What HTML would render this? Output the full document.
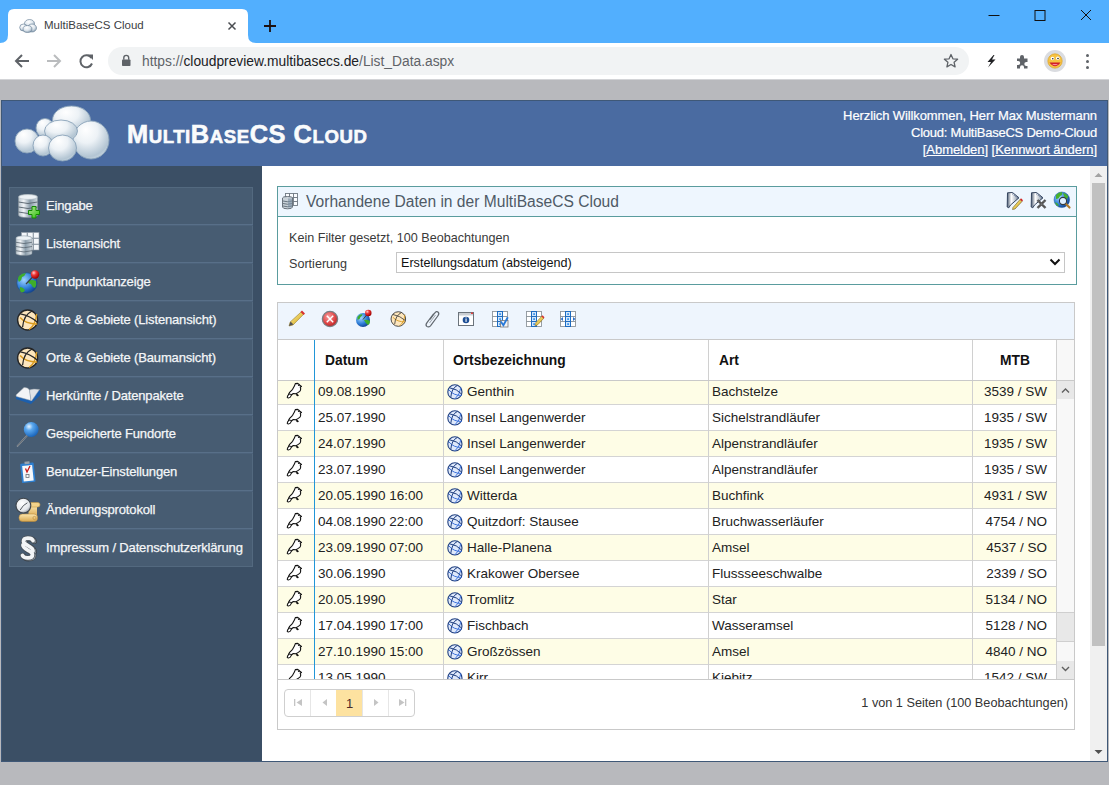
<!DOCTYPE html>
<html><head><meta charset="utf-8">
<style>
*{box-sizing:border-box;margin:0;padding:0}
html,body{width:1109px;height:785px;overflow:hidden;background:#b8b9bd;font-family:"Liberation Sans",sans-serif;position:relative}
.a{position:absolute}
#titlebar{left:0;top:0;width:1109px;height:43px;background:#52affe}
#tab{left:0;top:9px;width:260px;height:34px}
#toolbar{left:0;top:43px;width:1109px;height:36px;background:#fff}
#tline{left:0;top:79px;width:1109px;height:1px;background:#d3d4d7}
#omni{left:108px;top:47px;width:861px;height:28px;border-radius:14px;background:#f1f3f4}
#url{left:142px;top:54px;font-size:13.8px;color:#202124;white-space:nowrap}
#url span{color:#5f6368}
#tabtitle{left:44px;top:18.8px;font-size:11.5px;color:#3c4043;white-space:nowrap}
#frame{left:1px;top:100px;width:1107px;height:662px;border:1px solid #3f5877;background:#fff}
#header{left:2px;top:101px;width:1105px;height:65px;background:#4a6ba1}
#sidebar{left:2px;top:166px;width:260px;height:595px;background:#3b4f65}
#vscroll{left:1090px;top:166px;width:17px;height:595px;background:#f0f0f0}
#logo{left:10px;top:100px}
#brand{left:127px;top:118.5px;font-size:25.4px;font-weight:bold;color:#fafbfc;white-space:nowrap;line-height:30px;letter-spacing:0.55px;-webkit-text-stroke:0.6px #fafbfc}
#brand b{font-weight:bold}#brand i{font-style:normal;font-size:18.6px}
#welcome{right:12px;top:107px;text-align:right;color:#fff;font-size:13px;line-height:17px;white-space:nowrap;-webkit-text-stroke:0.2px #fff}
#welcome u{text-decoration:underline}

#menu{left:9px;top:187px;width:244px;height:380px;background:#475c72;border:1px solid #53697f}
.sep{position:absolute;left:9px;width:244px;height:1px;background:#586f88;box-shadow:0 1px 0 #4c627a}
.mi{position:absolute;left:46px;margin-top:1px;font-size:13px;letter-spacing:-0.15px;color:#f4f6f8;-webkit-text-stroke:0.25px #f4f6f8;white-space:nowrap;line-height:16px}

#panel{left:277px;top:186px;width:800px;height:99px;border:1px solid #5a9c9e;background:#fff}
#phead{left:278px;top:187px;width:798px;height:30px;background:#eef6fe;border-bottom:1px solid #5a9c9e}
#ptitle{left:306px;top:193px;font-size:15.6px;color:#4e5a66;white-space:nowrap;line-height:18px}
.txt{position:absolute;font-size:12.6px;color:#3a3a3a;white-space:nowrap;line-height:15px}
#sel{left:396px;top:252px;width:669px;height:21px;border:1px solid #c6c6c6;background:#fff}
#seltxt{left:401px;top:256px;font-size:12.6px;color:#111;white-space:nowrap;line-height:15px}
#grid{left:277px;top:302px;width:798px;height:428px;border:1px solid #c9c9c9;background:#fff}
#gtool{left:278px;top:303px;width:796px;height:37px;background:#eef5fd;border-bottom:1px solid #c9c9c9}
#ghead{left:278px;top:340px;width:779px;height:41px;background:#fff;border-bottom:1px solid #c9c9c9}
.th{position:absolute;top:353px;font-size:13.8px;font-weight:bold;color:#111;white-space:nowrap;line-height:16px}
.vl{position:absolute;width:1px;background:#d0d0d0}
.row{position:absolute;left:278px;width:779px;height:26px;border-bottom:1px solid #d4d4d4}
.ye{background:#fefde6}
.td{position:absolute;font-size:13.5px;color:#222;white-space:nowrap;line-height:16px}
#rows{left:278px;top:381px;width:796px;height:298px;overflow:hidden}
</style></head>
<body>
<div id="titlebar" class="a"></div>
<svg id="tab" class="a" width="260" height="34" viewBox="0 0 260 34">
 <path d="M0 34 Q8 34 8 26 L8 6 Q8 0 14 0 L242 0 Q248 0 248 6 L248 26 Q248 34 256 34 Z" fill="#fff"/>
</svg>
<div id="tabtitle" class="a">MultiBaseCS Cloud</div>
<div id="toolbar" class="a"></div>
<div id="tline" class="a"></div>
<div id="omni" class="a"></div>
<div id="url" class="a"><span>https://</span>cloudpreview.multibasecs.de<span>/List_Data.aspx</span></div>


<svg class="a" style="left:0;top:0" width="1109" height="80" viewBox="0 0 1109 80">
 <defs>
  <radialGradient id="fav" cx="0.4" cy="0.3" r="0.8"><stop offset="0" stop-color="#fff"/><stop offset="0.5" stop-color="#dfe7ee"/><stop offset="1" stop-color="#7990a5"/></radialGradient>
 </defs>
 <g fill="url(#fav)" stroke="#5f7890" stroke-width="0.6">
  <ellipse cx="29.5" cy="23.5" rx="5" ry="4"/>
  <ellipse cx="23.5" cy="27.5" rx="3.8" ry="3.5"/>
  <ellipse cx="32" cy="28" rx="4.5" ry="4"/>
  <ellipse cx="27.5" cy="29" rx="4.5" ry="3.5"/>
 </g>
 <path d="M228.5 22.5 L235.5 29.5 M235.5 22.5 L228.5 29.5" stroke="#4a4d51" stroke-width="1.5"/>
 <path d="M270 20 V32 M264 26 H276" stroke="#1c1010" stroke-width="1.8"/>
 <path d="M988.5 15.5 H999.5" stroke="#111" stroke-width="1"/>
 <rect x="1035" y="10.5" width="10" height="10" fill="none" stroke="#111" stroke-width="1"/>
 <path d="M1081 10 L1091 20 M1091 10 L1081 20" stroke="#111" stroke-width="1"/>
 <path d="M29 61 H16 M22 55 L16 61 L22 67" fill="none" stroke="#5f6368" stroke-width="2"/>
 <path d="M47 61 H60 M54 55 L60 61 L54 67" fill="none" stroke="#babcbe" stroke-width="2"/>
 <path d="M91.5 58 A6 6 0 1 0 92 63.5" fill="none" stroke="#5f6368" stroke-width="2"/>
 <path d="M87.5 54.5 H93 V60 Z" fill="#5f6368"/>
 <rect x="122" y="59.5" width="8.5" height="6.5" rx="0.8" fill="#5f6368"/>
 <path d="M123.8 59.8 V57.8 A2.45 2.45 0 0 1 128.7 57.8 V59.8" fill="none" stroke="#5f6368" stroke-width="1.4"/>
 <path d="M951 54.5 L952.9 58.8 L957.6 59.2 L954.1 62.3 L955.1 66.9 L951 64.5 L946.9 66.9 L947.9 62.3 L944.4 59.2 L949.1 58.8 Z" fill="none" stroke="#5f6368" stroke-width="1.3" stroke-linejoin="round"/>
 <path d="M993.5 55 L987.5 62 H991 L988 67.5 L995.5 59.5 H992 L994.5 55 Z" fill="#202124"/>
 <path d="M1017 58.5 h3 v-1.5 a2 2 0 0 1 4 0 v1.5 h3.5 v3.5 h-1.2 a2 2 0 0 0 0 4 h1.2 v2.5 h-3.5 v-1.2 a2 2 0 0 0 -4 0 v1.2 h-3 v-3.5 h1.2 a2 2 0 0 0 0 -4 h-1.2 Z" fill="#5f6368"/>
 <circle cx="1055" cy="61" r="11" fill="#dadce0"/>
 <circle cx="1055" cy="61" r="7.2" fill="#f6c343" stroke="#d99a1a" stroke-width="0.6"/>
 <path d="M1049.5 62.5 Q1055 70 1060.5 62.5 Z" fill="#d0202a"/>
 <path d="M1052 64 Q1055 66.5 1058 64" fill="#ff8aa0"/>
 <circle cx="1052.5" cy="58.5" r="1.8" fill="#fff"/><circle cx="1057.8" cy="58.2" r="1.8" fill="#fff"/>
 <circle cx="1052.8" cy="58.8" r="0.8" fill="#222"/><circle cx="1058" cy="58.5" r="0.8" fill="#222"/>
 <circle cx="1087.5" cy="55.5" r="1.5" fill="#5f6368"/><circle cx="1087.5" cy="61.5" r="1.5" fill="#5f6368"/><circle cx="1087.5" cy="67.5" r="1.5" fill="#5f6368"/>
</svg>
<div id="frame" class="a"></div>
<div id="header" class="a"></div>
<div id="sidebar" class="a"></div>
<div id="vscroll" class="a"></div>

<svg id="logo" class="a" width="110" height="66" viewBox="10 100 110 66">
 <defs>
  <radialGradient id="cg" cx="0.4" cy="0.32" r="0.8" fx="0.35" fy="0.22">
   <stop offset="0" stop-color="#ffffff"/>
   <stop offset="0.4" stop-color="#edf2f6"/>
   <stop offset="0.8" stop-color="#b3c5d3"/>
   <stop offset="1" stop-color="#d5e0e8"/>
  </radialGradient>
 </defs>
 <g fill="url(#cg)" stroke="#8aa3b9" stroke-width="0.9">
  <ellipse cx="71.5" cy="120" rx="19" ry="14"/>
  <ellipse cx="45" cy="128" rx="9" ry="9.5"/>
  <ellipse cx="27" cy="141" rx="12" ry="12"/>
  <ellipse cx="91" cy="140" rx="18" ry="19"/>
  <ellipse cx="61" cy="131" rx="16.5" ry="11"/>
  <ellipse cx="43" cy="145.5" rx="10" ry="10.5"/>
  <ellipse cx="62.5" cy="148" rx="14" ry="13"/>
 </g>
</svg>
<div id="menu" class="a"></div>
<div class="sep" style="top:224px"></div><div class="sep" style="top:262px"></div><div class="sep" style="top:300px"></div><div class="sep" style="top:338px"></div><div class="sep" style="top:376px"></div><div class="sep" style="top:414px"></div><div class="sep" style="top:452px"></div><div class="sep" style="top:490px"></div><div class="sep" style="top:528px"></div>
<div class="mi" style="top:197px">Eingabe</div>
<div class="mi" style="top:235px">Listenansicht</div>
<div class="mi" style="top:273px">Fundpunktanzeige</div>
<div class="mi" style="top:311px">Orte &amp; Gebiete (Listenansicht)</div>
<div class="mi" style="top:349px">Orte &amp; Gebiete (Baumansicht)</div>
<div class="mi" style="top:387px">Herkünfte / Datenpakete</div>
<div class="mi" style="top:425px">Gespeicherte Fundorte</div>
<div class="mi" style="top:463px">Benutzer-Einstellungen</div>
<div class="mi" style="top:501px">Änderungsprotokoll</div>
<div class="mi" style="top:539px">Impressum / Datenschutzerklärung</div>

<svg class="a" style="left:0;top:0" width="262" height="785" viewBox="0 0 262 785">
<defs>
 <linearGradient id="dbg" x1="0" y1="0" x2="1" y2="0">
  <stop offset="0" stop-color="#b9c4cc"/><stop offset="0.28" stop-color="#f2f5f8"/><stop offset="0.6" stop-color="#8b9dab"/><stop offset="1" stop-color="#cdd6dd"/>
 </linearGradient>
 <linearGradient id="plg" x1="0" y1="0" x2="1" y2="1">
  <stop offset="0" stop-color="#b5e59a"/><stop offset="1" stop-color="#2ec40a"/>
 </linearGradient>
 <radialGradient id="glb" cx="0.35" cy="0.35" r="0.7">
  <stop offset="0" stop-color="#9fd3ff"/><stop offset="0.6" stop-color="#2f7fd8"/><stop offset="1" stop-color="#12408f"/>
 </radialGradient>
 <radialGradient id="redb" cx="0.35" cy="0.3" r="0.7">
  <stop offset="0" stop-color="#ffd0d0"/><stop offset="0.4" stop-color="#f03a3a"/><stop offset="1" stop-color="#a00000"/>
 </radialGradient>
 <radialGradient id="blub" cx="0.35" cy="0.3" r="0.75">
  <stop offset="0" stop-color="#e8f4ff"/><stop offset="0.35" stop-color="#5aa7ee"/><stop offset="1" stop-color="#1561b8"/>
 </radialGradient>
 <linearGradient id="scr" x1="0" y1="0" x2="0" y2="1">
  <stop offset="0" stop-color="#fbe7b0"/><stop offset="1" stop-color="#d9a850"/>
 </linearGradient>
 <radialGradient id="clk" cx="0.4" cy="0.35" r="0.7">
  <stop offset="0" stop-color="#ffffff"/><stop offset="0.7" stop-color="#e3e6ea"/><stop offset="1" stop-color="#8a9098"/>
 </radialGradient>
 <linearGradient id="par" x1="0" y1="0" x2="1" y2="1">
  <stop offset="0" stop-color="#ffffff"/><stop offset="0.6" stop-color="#d8dde2"/><stop offset="1" stop-color="#7d858d"/>
 </linearGradient>
 <g id="db">
  <path d="M0 2.5 Q0 0 9.5 0 Q19 0 19 2.5 L19 20.5 Q19 23 9.5 23 Q0 23 0 20.5 Z" fill="url(#dbg)" stroke="#8a969f" stroke-width="0.7"/>
  <ellipse cx="9.5" cy="2.5" rx="9.3" ry="2.4" fill="#eef3f6" stroke="#a9b5bd" stroke-width="0.5"/>
  <path d="M0 7.5 Q9.5 10.5 19 7.5 M0 12.5 Q9.5 15.5 19 12.5 M0 17.5 Q9.5 20.5 19 17.5" fill="none" stroke="#55616b" stroke-width="0.9"/>
 </g>
 <g id="oglobe">
  <circle cx="11" cy="11" r="10" fill="#fde6bd" stroke="#262626" stroke-width="1.4"/>
  <path d="M3.5 8.5 Q9 15 20.5 15 M20 5 Q19 16 12.5 20.5" fill="none" stroke="#d89a1e" stroke-width="1.4"/>
  <path d="M15.5 2 Q7 6 6 18 M3.8 4.8 Q14 7 20.5 13" fill="none" stroke="#262626" stroke-width="1.3"/>
 </g>
</defs>
<!-- 1 Eingabe -->
<use href="#db" x="18.5" y="194.5"/>
<path d="M32 206.5 h4 v4 h3.5 v4 h-3.5 v3.5 h-4 v-3.5 h-3.5 v-4 h3.5 z" fill="url(#plg)" stroke="#138a00" stroke-width="1"/>
<!-- 2 Listenansicht -->
<g fill="#f4f7fa" stroke="#8f9aa5" stroke-width="0.6">
 <rect x="21.5" y="232.5" width="5.5" height="5.5"/><rect x="27.5" y="232.5" width="5.5" height="5.5"/><rect x="33.5" y="232.5" width="5.5" height="5.5"/>
 <rect x="33.5" y="238.5" width="5.5" height="5.5"/><rect x="33.5" y="244.5" width="5.5" height="5.5"/>
 <rect x="27.5" y="238.5" width="5.5" height="5.5"/><rect x="27.5" y="244.5" width="5.5" height="5.5"/>
</g>
<g transform="translate(16 236) scale(0.84)"><use href="#db"/></g>
<!-- 3 Fundpunktanzeige -->
<circle cx="27" cy="283" r="10.2" fill="url(#glb)" stroke="#1d4f8a" stroke-width="0.6"/>
<path d="M19 276 q3 -3 7 -3 q-1 3 -4 4 q0 3 -3 5 q-2 -3 0 -6z M28 281 q4 -2 8 0 q1 4 -1 7 q-3 -1 -4 -4 q-3 0 -3 -3z M20 287 q3 0 5 3 q-1 3 -4 2 q-2 -2 -1 -5z" fill="#3fae2a"/>
<path d="M26 284 L34 275.5" stroke="#404040" stroke-width="1.2"/>
<circle cx="35" cy="274.5" r="4.2" fill="url(#redb)"/>
<!-- 4,5 Orte -->
<use href="#oglobe" x="16.6" y="309"/>
<use href="#oglobe" x="16.6" y="347"/>
<!-- 6 Herkuenfte book -->
<path d="M16 396.5 L24.5 388.5 Q28 388 30 391 L40 390.5 L40.5 395 L31 404 L16 399 Z" fill="#1b5fae"/>
<path d="M16 395 L24 387.5 Q28 387 29.5 390 L31 400.5 L16.5 396.5 Z" fill="#f3f4f6" stroke="#9aa3ab" stroke-width="0.5"/>
<path d="M29.5 390 Q33 388.5 39.5 389.5 L31.5 401 L31 400.5 Z" fill="#e1e5e9" stroke="#9aa3ab" stroke-width="0.5"/>
<!-- 7 Gespeicherte Fundorte -->
<path d="M28.5 434 L17.5 446" stroke="#9aa0a6" stroke-width="1.6" stroke-linecap="round"/>
<path d="M28.5 434 L17.5 446" stroke="#40454a" stroke-width="0.6"/>
<circle cx="31.2" cy="429.5" r="7.4" fill="url(#blub)"/>
<!-- 8 Benutzer clipboard -->
<rect x="21" y="463" width="13.5" height="19.5" rx="1" fill="#2d7fd0" transform="rotate(-6 28 472)"/>
<rect x="22.8" y="465.5" width="10" height="15.5" fill="#f6f8fa" transform="rotate(-6 28 472)"/>
<rect x="25.5" y="461.5" width="5" height="2.5" fill="#9aa3ab" transform="rotate(-6 28 472)"/>
<path d="M25.5 468.5 l1.5 3.5 l3 -6" fill="none" stroke="#c81818" stroke-width="1.3"/>
<rect x="26" y="474.5" width="3" height="3" fill="none" stroke="#6a7078" stroke-width="0.8"/>
<!-- 9 Aenderungsprotokoll -->
<rect x="28.5" y="505" width="8.5" height="12" fill="url(#scr)"/>
<rect x="28.5" y="502.5" width="11.5" height="4.5" rx="2.2" fill="#f3d38a" stroke="#c59a48" stroke-width="0.6"/>
<rect x="19" y="514" width="18.5" height="7.5" rx="3.5" fill="url(#scr)" stroke="#b98a3a" stroke-width="0.6"/>
<circle cx="34.5" cy="518" r="1.6" fill="none" stroke="#b98a3a" stroke-width="0.6"/>
<circle cx="23.4" cy="505.6" r="7.4" fill="url(#clk)" stroke="#3f464d" stroke-width="1.1"/>
<path d="M23.4 505.6 L27.4 502.8 M23.4 505.6 L20.2 510" stroke="#30363c" stroke-width="0.8"/>
<!-- 10 Impressum paragraph -->
<g transform="translate(20 536.5)" fill="none" stroke-linecap="round">
 <g transform="translate(1.3 0.8)" stroke="#3a4148" stroke-width="5.4"><path d="M13 4 C11.5 0.8 3.5 0.6 3.5 4.8 C3.5 9 13 9.5 13 14.5"/><path d="M2.5 19 C4 22.2 12.5 22.4 12.5 18.2 C12.5 14 3 13.5 3 8.5"/></g>
 <g transform="translate(1.3 0.8)" stroke="#9aa2aa" stroke-width="3.8"><path d="M13 4 C11.5 0.8 3.5 0.6 3.5 4.8 C3.5 9 13 9.5 13 14.5"/><path d="M2.5 19 C4 22.2 12.5 22.4 12.5 18.2 C12.5 14 3 13.5 3 8.5"/></g>
 <g stroke="#4a525a" stroke-width="5.2"><path d="M13 4 C11.5 0.8 3.5 0.6 3.5 4.8 C3.5 9 13 9.5 13 14.5"/><path d="M2.5 19 C4 22.2 12.5 22.4 12.5 18.2 C12.5 14 3 13.5 3 8.5"/></g>
 <g stroke="#f2f4f6" stroke-width="3.8"><path d="M13 4 C11.5 0.8 3.5 0.6 3.5 4.8 C3.5 9 13 9.5 13 14.5"/><path d="M2.5 19 C4 22.2 12.5 22.4 12.5 18.2 C12.5 14 3 13.5 3 8.5"/></g>
</g>
</svg>

<div id="panel" class="a"></div>
<div id="phead" class="a"></div>
<div id="ptitle" class="a">Vorhandene Daten in der MultiBaseCS Cloud</div>
<div class="txt" style="left:289px;top:231px">Kein Filter gesetzt, 100 Beobachtungen</div>
<div class="txt" style="left:289px;top:257px">Sortierung</div>
<div id="sel" class="a"></div>
<div id="seltxt" class="a">Erstellungsdatum (absteigend)</div>
<svg class="a" style="left:1049px;top:258px" width="12" height="8" viewBox="0 0 12 8"><path d="M1.5 1.5 L6 6 L10.5 1.5" fill="none" stroke="#111" stroke-width="2"/></svg>
<div id="grid" class="a"></div>
<div id="gtool" class="a"></div>
<div id="ghead" class="a"></div>
<div class="th" style="left:325px">Datum</div>
<div class="th" style="left:453px">Ortsbezeichnung</div>
<div class="th" style="left:719px">Art</div>
<div class="th" style="left:1000px">MTB</div>
<div class="a" style="left:1056px;top:340px;width:18px;height:41px;background:#f8f8f8;border-left:1px solid #d0d0d0;border-bottom:1px solid #c9c9c9"></div>
<div id="rows" class="a">
<div class="row ye" style="top:-2px;left:0"></div><div class="td" style="left:40px;top:3px">09.08.1990</div><div class="td" style="left:189px;top:3px">Genthin</div><div class="td" style="left:434px;top:3px">Bachstelze</div><div class="td" style="right:27px;top:3px">3539 / SW</div>
<div class="row" style="top:24px;left:0"></div><div class="td" style="left:40px;top:29px">25.07.1990</div><div class="td" style="left:189px;top:29px">Insel Langenwerder</div><div class="td" style="left:434px;top:29px">Sichelstrandläufer</div><div class="td" style="right:27px;top:29px">1935 / SW</div>
<div class="row ye" style="top:50px;left:0"></div><div class="td" style="left:40px;top:55px">24.07.1990</div><div class="td" style="left:189px;top:55px">Insel Langenwerder</div><div class="td" style="left:434px;top:55px">Alpenstrandläufer</div><div class="td" style="right:27px;top:55px">1935 / SW</div>
<div class="row" style="top:76px;left:0"></div><div class="td" style="left:40px;top:81px">23.07.1990</div><div class="td" style="left:189px;top:81px">Insel Langenwerder</div><div class="td" style="left:434px;top:81px">Alpenstrandläufer</div><div class="td" style="right:27px;top:81px">1935 / SW</div>
<div class="row ye" style="top:102px;left:0"></div><div class="td" style="left:40px;top:107px">20.05.1990 16:00</div><div class="td" style="left:189px;top:107px">Witterda</div><div class="td" style="left:434px;top:107px">Buchfink</div><div class="td" style="right:27px;top:107px">4931 / SW</div>
<div class="row" style="top:128px;left:0"></div><div class="td" style="left:40px;top:133px">04.08.1990 22:00</div><div class="td" style="left:189px;top:133px">Quitzdorf: Stausee</div><div class="td" style="left:434px;top:133px">Bruchwasserläufer</div><div class="td" style="right:27px;top:133px">4754 / NO</div>
<div class="row ye" style="top:154px;left:0"></div><div class="td" style="left:40px;top:159px">23.09.1990 07:00</div><div class="td" style="left:189px;top:159px">Halle-Planena</div><div class="td" style="left:434px;top:159px">Amsel</div><div class="td" style="right:27px;top:159px">4537 / SO</div>
<div class="row" style="top:180px;left:0"></div><div class="td" style="left:40px;top:185px">30.06.1990</div><div class="td" style="left:189px;top:185px">Krakower Obersee</div><div class="td" style="left:434px;top:185px">Flussseeschwalbe</div><div class="td" style="right:27px;top:185px">2339 / SO</div>
<div class="row ye" style="top:206px;left:0"></div><div class="td" style="left:40px;top:211px">20.05.1990</div><div class="td" style="left:189px;top:211px">Tromlitz</div><div class="td" style="left:434px;top:211px">Star</div><div class="td" style="right:27px;top:211px">5134 / NO</div>
<div class="row" style="top:232px;left:0"></div><div class="td" style="left:40px;top:237px">17.04.1990 17:00</div><div class="td" style="left:189px;top:237px">Fischbach</div><div class="td" style="left:434px;top:237px">Wasseramsel</div><div class="td" style="right:27px;top:237px">5128 / NO</div>
<div class="row ye" style="top:258px;left:0"></div><div class="td" style="left:40px;top:263px">27.10.1990 15:00</div><div class="td" style="left:189px;top:263px">Großzössen</div><div class="td" style="left:434px;top:263px">Amsel</div><div class="td" style="right:27px;top:263px">4840 / NO</div>
<div class="row" style="top:284px;left:0"></div><div class="td" style="left:40px;top:289px">13.05.1990</div><div class="td" style="left:189px;top:289px">Kirr</div><div class="td" style="left:434px;top:289px">Kiebitz</div><div class="td" style="right:27px;top:289px">1542 / SW</div>
<div class="vl" style="left:165px;top:0;height:298px"></div><div class="vl" style="left:430px;top:0;height:298px"></div><div class="vl" style="left:694px;top:0;height:298px"></div><div class="vl" style="left:778px;top:0;height:298px"></div>
<div class="a" style="left:779px;top:0;width:17px;height:298px;background:#f8f8f8"></div>
<div class="a" style="left:779px;top:0;width:17px;height:18px;background:#e8e8e8"></div>
<div class="a" style="left:779px;top:231px;width:17px;height:30px;background:#e8e8e8;border-top:1px solid #cfcfcf;border-bottom:1px solid #cfcfcf"></div>
<div class="a" style="left:779px;top:280px;width:17px;height:18px;background:#e8e8e8"></div>
</div>
<div class="vl" style="left:443px;top:340px;height:40px"></div><div class="vl" style="left:708px;top:340px;height:40px"></div><div class="vl" style="left:972px;top:340px;height:40px"></div>
<div class="a" style="left:314px;top:340px;width:1px;height:339px;background:#2196d8"></div>
<div class="a" style="left:278px;top:679px;width:796px;height:1px;background:#c9c9c9"></div>
<div class="a" style="left:284px;top:689px;width:131px;height:28px;border:1px solid #cfcfcf;border-radius:4px;background:#fff;overflow:hidden">
<div class="a" style="left:25px;top:0;width:1px;height:26px;background:#e6e6e6"></div><div class="a" style="left:77px;top:0;width:1px;height:26px;background:#e6e6e6"></div>
<div class="a" style="left:51px;top:0;width:26px;height:26px;background:#fde2a0"></div>
<div class="a" style="left:103px;top:0;width:1px;height:26px;background:#e6e6e6"></div>
</div>
<div class="td" style="left:346px;top:695.5px;font-size:13px;color:#4a2a2a">1</div>
<div class="td" style="right:41px;top:694.5px;font-size:12.7px;color:#333">1 von 1 Seiten (100 Beobachtungen)</div>

<svg class="a" style="left:262px;top:166px" width="845" height="595" viewBox="262 166 845 595">
<defs>
 <g id="bglobe">
  <circle cx="0" cy="0" r="7.1" fill="#dfe9fb" stroke="#1f3f80" stroke-width="1.1"/>
  <path d="M-6 -2 Q-1 4 7 3.5 M6 -4.5 Q5 3 0 7" fill="none" stroke="#3f74dc" stroke-width="1"/>
  <path d="M2.5 -6.5 Q-3.5 -3.5 -4 5 M-5 -4 Q2 -3 6.5 2" fill="none" stroke="#1f3f80" stroke-width="1"/>
 </g>
 <g id="bird">
  <path d="M8.3 0.6 L10.8 0.4 Q12 0.8 12.5 2 L14.5 3.4 L13.2 4 Q13.9 5.5 13.6 6.6 Q13.3 8 12.7 8.4 Q11 9.6 9 10.7 L6.3 10.5 Q4.6 11.5 4.2 12.5 Q3.8 14.6 1.4 15 Q0 14.8 0.3 13.9 Q0.5 12.8 1.6 11.6 L2.6 9.3 Q4.2 7.8 5.6 6.3 Q6.6 4.5 7.4 3.1 Z" fill="#fff" stroke="#111" stroke-width="1.1" stroke-linejoin="round"/>
  <path d="M9.2 10.6 L9.6 12.4 L11.8 12.3 M10.4 11 L10.6 13.2 M1.4 10.9 L4.8 11.6" fill="none" stroke="#111" stroke-width="0.95"/>
  <circle cx="11.7" cy="2.3" r="0.8" fill="#111"/>
 </g>
 <linearGradient id="pen" x1="0" y1="0" x2="1" y2="1"><stop offset="0" stop-color="#fff3a0"/><stop offset="1" stop-color="#d0a010"/></linearGradient>
 <radialGradient id="redx" cx="0.4" cy="0.35" r="0.7"><stop offset="0" stop-color="#f8a0a0"/><stop offset="0.6" stop-color="#e04848"/><stop offset="1" stop-color="#b02020"/></radialGradient>
 <radialGradient id="glb2" cx="0.35" cy="0.35" r="0.7"><stop offset="0" stop-color="#a8d8ff"/><stop offset="0.6" stop-color="#2f7fd8"/><stop offset="1" stop-color="#12408f"/></radialGradient>
 <radialGradient id="redb2" cx="0.35" cy="0.3" r="0.7"><stop offset="0" stop-color="#ffd0d0"/><stop offset="0.4" stop-color="#f03a3a"/><stop offset="1" stop-color="#a00000"/></radialGradient>
 <linearGradient id="fun" x1="0" y1="0" x2="1" y2="0"><stop offset="0" stop-color="#4a5a70"/><stop offset="0.35" stop-color="#ffffff"/><stop offset="0.7" stop-color="#b9c2cc"/><stop offset="1" stop-color="#55657a"/></linearGradient>
</defs>
<!-- panel header icon: db + grid -->
<g fill="#fafcfe" stroke="#707a84" stroke-width="0.9">
 <rect x="285.5" y="193.5" width="4" height="4"/><rect x="289.5" y="193.5" width="4" height="4"/><rect x="293.5" y="193.5" width="4" height="4"/>
 <rect x="293.5" y="197.5" width="4" height="4"/><rect x="293.5" y="201.5" width="4" height="4"/>
</g>
<path d="M282.5 198 Q282.5 196.5 287.5 196.5 Q292.5 196.5 292.5 198 L292.5 207 Q292.5 208.8 287.5 208.8 Q282.5 208.8 282.5 207 Z" fill="#c9d2d9" stroke="#5d6770" stroke-width="0.9"/>
<path d="M283 201 Q287.5 202.5 292 201 M283 203.5 Q287.5 205 292 203.5 M283 206 Q287.5 207.5 292 206" fill="none" stroke="#4d5a66" stroke-width="0.8"/>
<rect x="288" y="198.5" width="4" height="9" fill="#7e93a5" opacity="0.6"/>
<!-- panel header right icons -->
<g>
 <path d="M1007.5 192.8 L1012.5 192.5 L1019 197.8 L1010.5 205 L1008.8 207.8 L1007.2 207 Z" fill="url(#fun)" stroke="#34445e" stroke-width="1"/><path d="M1012.5 193.5 L1018 198" stroke="#6a7a9a" stroke-width="1.5" stroke-dasharray="1 1"/>
 <path d="M1013 207.5 L1020 199.5 L1022 201.5 L1015 209 L1012.5 209.5 Z" fill="url(#pen)" stroke="#6a5a20" stroke-width="0.6"/>
 <path d="M1020 199.5 L1021 198.3 L1023 200.3 L1022 201.5 Z" fill="#d02020"/>
 <path d="M1031.5 192.8 L1036.5 192.5 L1043 197.8 L1034.5 205 L1032.8 207.8 L1031.2 207 Z" fill="url(#fun)" stroke="#34445e" stroke-width="1"/><path d="M1036.5 193.5 L1042 198" stroke="#6a7a9a" stroke-width="1.5" stroke-dasharray="1 1"/>
 <path d="M1037.5 200 L1045.5 208 M1045.5 200 L1037.5 208" stroke="#4a4a4a" stroke-width="2.4"/><path d="M1037.5 200 L1045.5 208 M1045.5 200 L1037.5 208" stroke="#cfcfcf" stroke-width="0.6" stroke-dasharray="0.8 1.2"/>
 <circle cx="1061.8" cy="199.8" r="7.8" fill="url(#glb2)" stroke="#1f5a9a" stroke-width="0.5"/>
 <path d="M1056 195 q3 -3 6 -3 q1 3 -2 4 q-1 3 -4 3z M1063 193 q3 0 5 3 q0 3 -2 3 q-2 -2 -3 -6z M1055 202 q3 1 4 4 q-3 0 -4 -4z" fill="#47b02c"/>
 <path d="M1065.5 203.5 L1069.5 207.5" stroke="#b07a2a" stroke-width="2.2" stroke-linecap="round"/>
 <circle cx="1063" cy="201" r="3.6" fill="#dff0ff" stroke="#333a40" stroke-width="1.1"/>
</g>
<!-- toolbar icons -->
<path d="M289 326 L290.2 322 L301.3 311.8 L303.7 314.2 L293 325 Z" fill="url(#pen)" stroke="#9a8030" stroke-width="0.6"/>
<path d="M289 326 L290.5 321.5 L293.5 324.5 Z" fill="#555"/>
<path d="M300.5 312 L302 310.5 L305 313.5 L303.5 315 Z" fill="#d83030"/>
<circle cx="330" cy="319" r="7.6" fill="url(#redx)" stroke="#7a7f84" stroke-width="1.3"/>
<path d="M326.8 315.8 L333.2 322.2 M333.2 315.8 L326.8 322.2" stroke="#fff" stroke-width="1.5"/>
<circle cx="363" cy="320" r="7" fill="url(#glb2)"/>
<path d="M357.5 317 q2 -3 5 -3 q0 2 -2 3 q0 2 -3 3z M364 320 q3 -1 6 1 q0 3 -2 4 q-2 -1 -4 -5z" fill="#3fae2a"/>
<path d="M363 319.5 L367 314.5" stroke="#404040" stroke-width="1"/>
<circle cx="368.3" cy="313" r="3.2" fill="url(#redb2)"/>
<g transform="translate(390.3 311) scale(0.73)">
  <circle cx="11" cy="11" r="10" fill="#fde6bd" stroke="#333" stroke-width="1.2"/>
  <path d="M3.5 8.5 Q9 15 20.5 15 M20 5 Q19 16 12.5 20.5" fill="none" stroke="#d89a1e" stroke-width="1.2"/>
  <path d="M15.5 2 Q7 6 6 18 M3.8 4.8 Q14 7 20.5 13" fill="none" stroke="#333" stroke-width="1.1"/>
</g>
<path d="M430 319.5 L434.8 313 Q436.6 310.8 438.2 312.2 Q439.6 313.6 437.8 316 L430.5 325.8 Q428.6 327.8 426.8 326.4 Q425.2 325 427 322.6 L433.8 313.5" fill="none" stroke="#5f666d" stroke-width="1.2"/><path d="M429.5 323 L435.5 315" fill="none" stroke="#8a9198" stroke-width="0.8"/>
<rect x="458.5" y="312.5" width="15" height="13" fill="#fff" stroke="#6b737b" stroke-width="1"/>
<rect x="459" y="313" width="14" height="2.5" fill="#c9ced3"/>
<rect x="471" y="312.5" width="2" height="1.5" fill="#e04040"/>
<circle cx="466" cy="320" r="3.3" fill="#1e4f95"/>
<rect x="465.5" y="318.7" width="1.1" height="3.2" fill="#fff"/><rect x="465.5" y="317.4" width="1.1" height="0.9" fill="#fff"/>
<g id="tgrid">
 <g fill="#fff" stroke="#8e959c" stroke-width="0.9">
  <rect x="492.5" y="311.5" width="5" height="5"/><rect x="502.5" y="311.5" width="5" height="5"/>
  <rect x="492.5" y="316.5" width="5" height="5"/><rect x="502.5" y="316.5" width="5" height="5"/>
  <rect x="492.5" y="321.5" width="5" height="5"/><rect x="502.5" y="321.5" width="5" height="5"/>
 </g>
 <g fill="#d2e6fb" stroke="#1f6cc0" stroke-width="1">
  <rect x="497.5" y="311.5" width="5" height="5"/><rect x="497.5" y="316.5" width="5" height="5"/><rect x="497.5" y="321.5" width="5" height="5"/>
 </g>
 <rect x="499.2" y="313.2" width="1.8" height="1.8" fill="#3d97ee"/><rect x="499.2" y="318.2" width="1.8" height="1.8" fill="#3d97ee"/><rect x="499.2" y="323.2" width="1.8" height="1.8" fill="#3d97ee"/>
</g>
<rect x="500.5" y="320.5" width="7.5" height="6.5" fill="#f4f4f4" stroke="#777" stroke-width="0.8"/>
<path d="M500.8 321.5 L503.4 325.3 L507.8 317.3" fill="none" stroke="#2a7ad8" stroke-width="1.9"/>
<use href="#tgrid" x="34"/>
<path d="M535 326 L536 322.5 L542 316 L544 318 L538 324.5 Z" fill="url(#pen)" stroke="#8a7020" stroke-width="0.6"/>
<path d="M541.5 316.5 L542.5 315.3 L544.5 317.3 L543.5 318.5 Z" fill="#d83030"/>
<use href="#tgrid" x="68"/>
<path d="M560.5 319 L563 317 L563 321 Z M575.5 319 L573 317 L573 321 Z" fill="#2f6fc8"/>
<svg x="278" y="381" width="779" height="298" viewBox="278 381 779 298" overflow="hidden"><use href="#bird" x="287" y="383"/><use href="#bird" x="287" y="409"/><use href="#bird" x="287" y="435"/><use href="#bird" x="287" y="461"/><use href="#bird" x="287" y="487"/><use href="#bird" x="287" y="513"/><use href="#bird" x="287" y="539"/><use href="#bird" x="287" y="565"/><use href="#bird" x="287" y="591"/><use href="#bird" x="287" y="617"/><use href="#bird" x="287" y="643"/><use href="#bird" x="287" y="669"/><use href="#bglobe" x="454.9" y="391.9"/><use href="#bglobe" x="454.9" y="417.9"/><use href="#bglobe" x="454.9" y="443.9"/><use href="#bglobe" x="454.9" y="469.9"/><use href="#bglobe" x="454.9" y="495.9"/><use href="#bglobe" x="454.9" y="521.9"/><use href="#bglobe" x="454.9" y="547.9"/><use href="#bglobe" x="454.9" y="573.9"/><use href="#bglobe" x="454.9" y="599.9"/><use href="#bglobe" x="454.9" y="625.9"/><use href="#bglobe" x="454.9" y="651.9"/><use href="#bglobe" x="454.9" y="677.9"/></svg>
<!-- pager arrows -->
<g fill="#c4c4c4">
 <rect x="294" y="699" width="1.3" height="7"/><path d="M302 699 L296.5 702.5 L302 706 Z"/>
 <path d="M327 699 L322.5 702.5 L327 706 Z"/>
 <path d="M374 699 L378.5 702.5 L374 706 Z"/>
 <path d="M399 699 L404.5 702.5 L399 706 Z"/><rect x="405" y="699" width="1.3" height="7"/>
</g>
<!-- page scrollbar -->
<rect x="1090" y="166" width="17" height="595" fill="#f0f0f0"/>
<path d="M1094.5 177 L1098.5 173 L1102.5 177 Z" fill="#a3a3a3"/>
<rect x="1092" y="183" width="13" height="463" fill="#c1c1c1"/>
<path d="M1094.5 750 L1098.5 754 L1102.5 750 Z" fill="#505050"/>
<!-- grid scrollbar chevrons -->
<path d="M1062 392.5 L1065.5 389 L1069 392.5" fill="none" stroke="#606060" stroke-width="1.4"/>
<path d="M1062 667 L1065.5 670.5 L1069 667" fill="none" stroke="#606060" stroke-width="1.4"/>
</svg>
<div id="brand" class="a"><b>M</b><i>ULTI</i><b>B</b><i>ASE</i><b>CS</b> <b>C</b><i>LOUD</i></div>
<div id="welcome" class="a"><div style="letter-spacing:-0.1px">Herzlich Willkommen, Herr Max Mustermann</div><div style="letter-spacing:-0.24px">Cloud: MultiBaseCS Demo-Cloud</div><div style="letter-spacing:-0.05px">[<u>Abmelden</u>] [<u>Kennwort ändern</u>]</div></div>
</body></html>
